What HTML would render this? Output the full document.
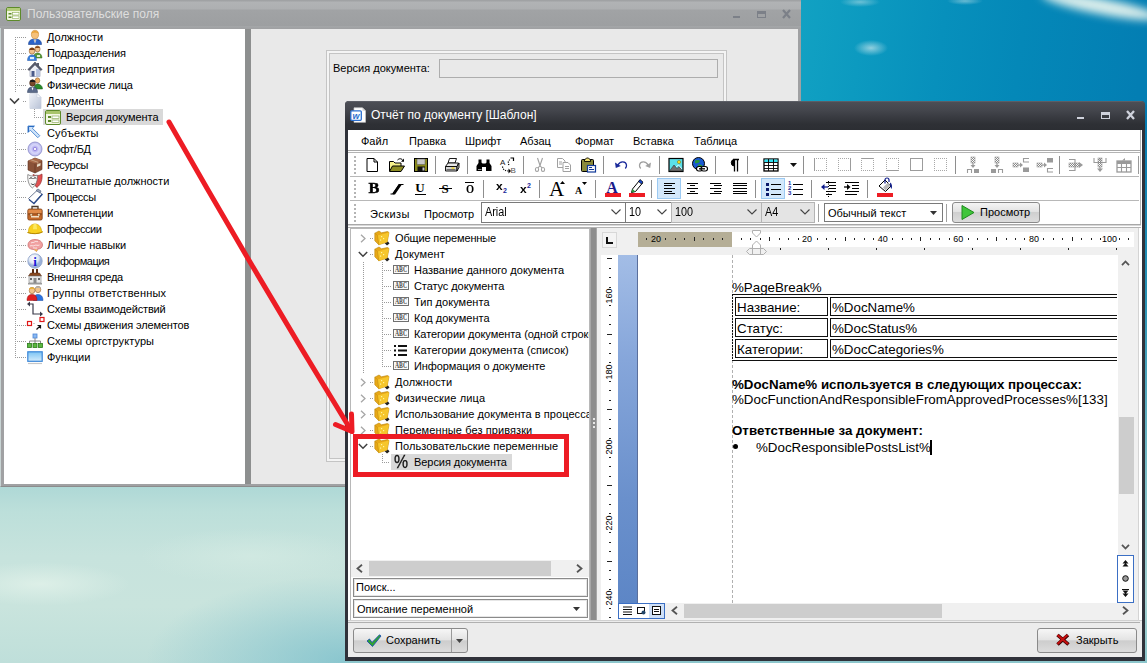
<!DOCTYPE html>
<html><head><meta charset="utf-8"><title>Отчёт по документу [Шаблон]</title>
<style>
*{box-sizing:border-box;margin:0;padding:0}
html,body{width:1147px;height:663px;overflow:hidden}
body{position:relative;font-family:"Liberation Sans","DejaVu Sans",sans-serif;font-size:11px;color:#000;background:#8cc}
.a{position:absolute}
.t{position:absolute;white-space:nowrap;line-height:16px;height:16px}
svg{position:absolute;overflow:visible}
#bg{left:0;top:0;width:1147px;height:663px;background:linear-gradient(180deg,#037eb3 0,#0379b0 110px,#2a93b5 300px,#7fc0c8 480px,#a5d2d2 600px,#8cc6cc 663px)}
#sky{left:795px;top:0;width:352px;height:105px;background:
radial-gradient(ellipse 18px 4px at 170px 1px,rgba(200,230,235,.5),rgba(200,230,235,0) 100%),
radial-gradient(ellipse 20px 5px at 65px 2px,rgba(200,230,235,.5),rgba(200,230,235,0) 100%),
radial-gradient(ellipse 17px 8px at 76px 48px,rgba(200,230,236,.7),rgba(200,230,236,0) 100%),
linear-gradient(98deg,#12a2c3 0,#0c9ac0 70px,#0790bc 150px,#0488b8 230px,#037eb3 352px)}
#sea{left:0;top:486px;width:346px;height:177px;background:
radial-gradient(ellipse 90px 22px at 40px 98px,rgba(226,242,234,.8),rgba(226,242,234,0) 100%),
radial-gradient(ellipse 110px 28px at 250px 70px,rgba(214,236,228,.6),rgba(214,236,228,0) 100%),
radial-gradient(ellipse 200px 85px at 346px 175px,rgba(125,192,204,.8),rgba(125,192,204,0) 100%),
linear-gradient(180deg,#aed8d6 0,#bcdfda 25px,#c7e3dd 70px,#c9e4dd 120px,#bfdfda 177px)}
.sepv{position:absolute;width:2px;border-left:1px solid #a0a0a0;border-right:1px solid #fff}
</style></head><body>
<div id="bg" class="a"></div><div id="sky" class="a"></div><div id="sea" class="a"></div><div class="a" style="left:1040px;top:-2px;width:120px;height:16px;border-radius:50%;background:rgba(236,246,240,.92);transform:rotate(11deg);filter:blur(4px)"></div>
<div class="a" style="left:0px;top:0px;width:801px;height:487px;background:#a0a1a3;border-bottom:1px solid #8c8c8c;border-left:1px solid #c8d4d4"></div>
<div class="a" style="left:0px;top:0px;width:801px;height:28px;background:linear-gradient(#a0a2a4 0,#a0a2a4 1px,#b1b3b5 2px,#adafb1 9px,#a1a3a5 10px,#9d9fa1 26px,#aaacae 27px,#999b9d 28px)"></div>
<svg style="left:6px;top:7px" width="15" height="14" viewBox="0 0 15 14"><rect x=".5" y=".5" width="14" height="13" rx="1.500" fill="#f1f5df" stroke="#5d8a2a"/><rect x="1" y="1" width="13" height="3" fill="#b3cc7a"/><rect x="2.500" y="6" width="3" height="1.500" fill="#5d8a2a"/><rect x="6.500" y="5.500" width="6.500" height="2.500" fill="#fff" stroke="#8aac52" stroke-width=".6"/><rect x="2.500" y="9.500" width="3" height="1.500" fill="#5d8a2a"/><rect x="6.500" y="9" width="6.500" height="2.500" fill="#fff" stroke="#8aac52" stroke-width=".6"/></svg>
<div class="t" style="left:27px;top:6px;font-size:12px;color:#dedede">Пользовательские поля</div>
<div class="a" style="left:733px;top:16px;width:7px;height:2px;background:#7c8088"></div>
<div class="a" style="left:757px;top:11px;width:9px;height:7px;border:1px solid #7c8088;border-top:3px solid #7c8088"></div>
<svg style="left:782px;top:10px" width="9" height="8" viewBox="0 0 9 8"><path d="M1 0l7 8M8 0l-7 8" stroke="#7c8088" stroke-width="2.200" fill="none"/></svg>
<div class="a" style="left:4px;top:29px;width:241px;height:455px;background:#fff"></div>
<div class="a" style="left:245px;top:29px;width:6px;height:455px;background:#8d8f8f"></div>
<div class="a" style="left:251px;top:29px;width:547px;height:455px;background:#e9e9e9"></div>
<div class="a" style="left:326px;top:50px;width:401px;height:412px;border:1px solid #c4c4c4;background:#f4f4f4"></div>
<div class="a" style="left:329px;top:53px;width:395px;height:406px;border:1px solid #c4c4c4;background:#e9e9e9"></div>
<div class="t" style="left:333px;top:60px;">Версия документа:</div>
<div class="a" style="left:439px;top:59px;width:279px;height:19px;border:1px solid #adadad;background:#e9e9e9"></div>
<div class="a" style="left:15px;top:37px;width:1px;height:321px;background-image:linear-gradient(180deg,#9a9a9a 1px,transparent 1px);background-size:1px 2px"></div>
<div class="a" style="left:15px;top:37px;width:11px;height:1px;background-image:linear-gradient(90deg,#9a9a9a 1px,transparent 1px);background-size:2px 1px"></div>
<div class="t" style="left:47px;top:29px;">Должности</div>
<div class="a" style="left:15px;top:53px;width:11px;height:1px;background-image:linear-gradient(90deg,#9a9a9a 1px,transparent 1px);background-size:2px 1px"></div>
<div class="t" style="left:47px;top:45px;letter-spacing:-0.08px">Подразделения</div>
<div class="a" style="left:15px;top:69px;width:11px;height:1px;background-image:linear-gradient(90deg,#9a9a9a 1px,transparent 1px);background-size:2px 1px"></div>
<div class="t" style="left:47px;top:61px;">Предприятия</div>
<div class="a" style="left:15px;top:85px;width:11px;height:1px;background-image:linear-gradient(90deg,#9a9a9a 1px,transparent 1px);background-size:2px 1px"></div>
<div class="t" style="left:47px;top:77px;letter-spacing:-0.16px">Физические лица</div>
<div class="a" style="left:9px;top:93px;width:12px;height:16px;background:#fff"></div>
<svg style="left:9px;top:97px" width="11" height="8" viewBox="0 0 11 8"><path d="M1 1.5 L5.5 6 L10 1.5" fill="none" stroke="#404040" stroke-width="1.6"/></svg>
<div class="a" style="left:23px;top:101px;width:3px;height:1px;background-image:linear-gradient(90deg,#9a9a9a 1px,transparent 1px);background-size:2px 1px"></div>
<div class="t" style="left:47px;top:93px;">Документы</div>
<div class="a" style="left:43px;top:109px;width:120px;height:16px;background:#d9d9d9"></div>
<div class="a" style="left:34px;top:103px;width:1px;height:15px;background-image:linear-gradient(180deg,#9a9a9a 1px,transparent 1px);background-size:1px 2px"></div>
<div class="a" style="left:34px;top:117px;width:10px;height:1px;background-image:linear-gradient(90deg,#9a9a9a 1px,transparent 1px);background-size:2px 1px"></div>
<svg style="left:45px;top:110px" width="16" height="15" viewBox="0 0 16 15"><rect x=".5" y=".5" width="15" height="14" rx="1.5" fill="#f3f6e4" stroke="#5d8a2a"/><rect x="1" y="1" width="14" height="3" fill="#a9c46c"/><rect x="3" y="6" width="3" height="2" fill="#5d8a2a"/><rect x="7" y="6" width="7" height="2.5" fill="#fff" stroke="#7da046" stroke-width=".6"/><rect x="3" y="10" width="3" height="2" fill="#5d8a2a"/><rect x="7" y="10" width="7" height="2.5" fill="#fff" stroke="#7da046" stroke-width=".6"/></svg>
<div class="t" style="left:66px;top:109px;letter-spacing:-.09px">Версия документа</div>
<div class="a" style="left:15px;top:133px;width:11px;height:1px;background-image:linear-gradient(90deg,#9a9a9a 1px,transparent 1px);background-size:2px 1px"></div>
<div class="t" style="left:47px;top:125px;letter-spacing:0.14px">Субъекты</div>
<div class="a" style="left:15px;top:149px;width:11px;height:1px;background-image:linear-gradient(90deg,#9a9a9a 1px,transparent 1px);background-size:2px 1px"></div>
<div class="t" style="left:47px;top:141px;letter-spacing:-0.26px">Софт/БД</div>
<div class="a" style="left:15px;top:165px;width:11px;height:1px;background-image:linear-gradient(90deg,#9a9a9a 1px,transparent 1px);background-size:2px 1px"></div>
<div class="t" style="left:47px;top:157px;letter-spacing:-0.31px">Ресурсы</div>
<div class="a" style="left:15px;top:181px;width:11px;height:1px;background-image:linear-gradient(90deg,#9a9a9a 1px,transparent 1px);background-size:2px 1px"></div>
<div class="t" style="left:47px;top:173px;">Внештатные должности</div>
<div class="a" style="left:15px;top:197px;width:11px;height:1px;background-image:linear-gradient(90deg,#9a9a9a 1px,transparent 1px);background-size:2px 1px"></div>
<div class="t" style="left:47px;top:189px;letter-spacing:-0.33px">Процессы</div>
<div class="a" style="left:15px;top:213px;width:11px;height:1px;background-image:linear-gradient(90deg,#9a9a9a 1px,transparent 1px);background-size:2px 1px"></div>
<div class="t" style="left:47px;top:205px;letter-spacing:-0.1px">Компетенции</div>
<div class="a" style="left:15px;top:229px;width:11px;height:1px;background-image:linear-gradient(90deg,#9a9a9a 1px,transparent 1px);background-size:2px 1px"></div>
<div class="t" style="left:47px;top:221px;letter-spacing:-0.47px">Профессии</div>
<div class="a" style="left:15px;top:245px;width:11px;height:1px;background-image:linear-gradient(90deg,#9a9a9a 1px,transparent 1px);background-size:2px 1px"></div>
<div class="t" style="left:47px;top:237px;">Личные навыки</div>
<div class="a" style="left:15px;top:261px;width:11px;height:1px;background-image:linear-gradient(90deg,#9a9a9a 1px,transparent 1px);background-size:2px 1px"></div>
<div class="t" style="left:47px;top:253px;letter-spacing:-0.51px">Информация</div>
<div class="a" style="left:15px;top:277px;width:11px;height:1px;background-image:linear-gradient(90deg,#9a9a9a 1px,transparent 1px);background-size:2px 1px"></div>
<div class="t" style="left:47px;top:269px;letter-spacing:-0.27px">Внешняя среда</div>
<div class="a" style="left:15px;top:293px;width:11px;height:1px;background-image:linear-gradient(90deg,#9a9a9a 1px,transparent 1px);background-size:2px 1px"></div>
<div class="t" style="left:47px;top:285px;letter-spacing:0.22px">Группы ответственных</div>
<div class="a" style="left:15px;top:309px;width:11px;height:1px;background-image:linear-gradient(90deg,#9a9a9a 1px,transparent 1px);background-size:2px 1px"></div>
<div class="t" style="left:47px;top:301px;letter-spacing:-0.16px">Схемы взаимодействий</div>
<div class="a" style="left:15px;top:325px;width:11px;height:1px;background-image:linear-gradient(90deg,#9a9a9a 1px,transparent 1px);background-size:2px 1px"></div>
<div class="t" style="left:47px;top:317px;letter-spacing:-0.14px">Схемы движения элементов</div>
<div class="a" style="left:15px;top:341px;width:11px;height:1px;background-image:linear-gradient(90deg,#9a9a9a 1px,transparent 1px);background-size:2px 1px"></div>
<div class="t" style="left:47px;top:333px;letter-spacing:0.09px">Схемы оргструктуры</div>
<div class="a" style="left:15px;top:357px;width:11px;height:1px;background-image:linear-gradient(90deg,#9a9a9a 1px,transparent 1px);background-size:2px 1px"></div>
<div class="t" style="left:47px;top:349px;">Функции</div>
<svg style="left:27px;top:29px" width="16" height="16" viewBox="0 0 16 16"><path d="M1.500 15.500c0-4 2.500-5.500 6.500-5.500s6.500 1.500 6.500 5.500z" fill="#2a62c8" stroke="#1a3f8a" stroke-width=".6"/><path d="M6.500 10.500l1.500 4l1.500-4z" fill="#fff"/><path d="M7.600 11l.4 3l.4-3z" fill="#444"/><ellipse cx="8" cy="5.500" rx="3.600" ry="4.200" fill="#f5c07a" stroke="#c88a3a" stroke-width=".6"/><path d="M4.500 4.500c.5-3 6-3.500 7 0c-2-1.500-5-1.500-7 0z" fill="#e8a030"/></svg>
<svg style="left:27px;top:45px" width="16" height="16" viewBox="0 0 16 16"><ellipse cx="10.500" cy="4" rx="2.600" ry="3" fill="#f2c08a" stroke="#8a5a2a" stroke-width=".6"/><path d="M8 3c.5-2.500 4.500-2.500 5 0z" fill="#8a4a1a"/><path d="M6.500 13c0-3.500 1.500-5 4-5s4.500 1.500 4.500 5z" fill="#5a9a3a" stroke="#3a6a1a" stroke-width=".5"/><rect x="10" y="10" width="3" height="2" fill="#dff0d0"/><ellipse cx="5" cy="6" rx="2.800" ry="3.200" fill="#f2c08a" stroke="#8a5a2a" stroke-width=".6"/><path d="M2.300 5c.5-3 5-3 5.500 0z" fill="#7a3a10"/><path d="M.5 15.500c0-3.500 1.500-5.500 4.500-5.500s4.500 2 4.500 5.500z" fill="#3a82e0" stroke="#1a4fa0" stroke-width=".5"/><rect x="3" y="12" width="4" height="2.200" fill="#e0eefc"/></svg>
<svg style="left:27px;top:61px" width="16" height="16" viewBox="0 0 16 16"><path d="M3 8v7.500h10v-7.500l-5-4.500z" fill="#eef0f6" stroke="#8a90a8" stroke-width=".6"/><path d="M9 8v7.500h4v-7.500z" fill="#b8c4e0"/><path d="M.8 8.500l7.200-7.500l7.200 7.500l-1.500 1l-5.700-5.800l-5.700 5.800z" fill="#5a5e6e" stroke="#3a3e4e" stroke-width=".5"/><rect x="4.500" y="10" width="3" height="5.500" fill="#4a5a8a"/><rect x="10" y="2" width="2" height="3" fill="#5a5e6e"/></svg>
<svg style="left:27px;top:77px" width="16" height="16" viewBox="0 0 16 16"><ellipse cx="10.500" cy="3.500" rx="2.300" ry="2.700" fill="#e8a860" stroke="#8a5a2a" stroke-width=".5"/><path d="M7 12c0-3.500 1.500-5 3.500-5s5 1.500 5 5z" fill="#2a8a2a" stroke="#1a5a1a" stroke-width=".5"/><ellipse cx="5.500" cy="6" rx="2.800" ry="3.200" fill="#7a4a2a" stroke="#3a2010" stroke-width=".6"/><path d="M2.800 5c.5-3 5-3 5.500 0z" fill="#1a1a1a"/><path d="M.5 15.500c0-3.500 1.500-5.500 5-5.500s5 2 5 5.500z" fill="#5a6a8a" stroke="#2a3a5a" stroke-width=".5"/><path d="M4.500 10.500l1 3l1-3z" fill="#fff"/></svg>
<svg style="left:27px;top:93px" width="16" height="16" viewBox="0 0 16 16"><path d="M3 .5h7l4 4v11h-11z" fill="#dfe4ee" stroke="#c0c8d8" stroke-width=".7"/><path d="M3 .5h7l4 4v11h-11z" fill="url(#dg)"/><path d="M10 .5v4h4z" fill="#f4f6fa" stroke="#c0c8d8" stroke-width=".5"/></svg>
<svg width="0" height="0" style="left:0;top:0"><defs><linearGradient id="dg" x1="0" y1="0" x2="1" y2="1"><stop offset="0" stop-color="#eef1f7"/><stop offset="1" stop-color="#b8c2d6"/></linearGradient><radialGradient id="cdg"><stop offset="0" stop-color="#fff"/><stop offset=".25" stop-color="#b0a8f0"/><stop offset=".6" stop-color="#d8d8fa"/><stop offset="1" stop-color="#b8b8ee"/></radialGradient><radialGradient id="ig" cx=".4" cy=".3"><stop offset="0" stop-color="#fff"/><stop offset=".7" stop-color="#dde6f4"/><stop offset="1" stop-color="#9ab0d8"/></radialGradient><linearGradient id="fg" x1="0" y1="0" x2="0" y2="1"><stop offset="0" stop-color="#7cc4f4"/><stop offset="1" stop-color="#d4ecfc"/></linearGradient></defs></svg>
<svg style="left:27px;top:125px" width="16" height="16" viewBox="0 0 16 16"><path d="M1 1h6.500l-2.200 2.200l7.500 7.500l-2 2l-7.500-7.500l-2.300 2.300z" fill="#cfe4fa" stroke="#4a86d0" stroke-width=".9"/><path d="M1.500 1.500h5.500M1.500 1.500v5.500" stroke="#2a6ac0" stroke-width="1.200"/></svg>
<svg style="left:27px;top:141px" width="16" height="16" viewBox="0 0 16 16"><circle cx="8" cy="8" r="7" fill="url(#cdg)" stroke="#8a8ac8" stroke-width=".8"/><circle cx="8" cy="8" r="1.600" fill="#fff" stroke="#8a7ad8" stroke-width=".8"/></svg>
<svg style="left:27px;top:157px" width="16" height="16" viewBox="0 0 16 16"><path d="M1 4l7-3l7 2.500v9l-7 3.500l-7-3z" fill="#8a5238" stroke="#5a3020" stroke-width=".6"/><path d="M1 4l7 2.500l7-3l-7-2.500z" fill="#a86a4a"/><path d="M8 6.500v9.500" stroke="#5a3020" stroke-width=".6"/><rect x="10" y="7" width="3.500" height="2.500" fill="#e8dcc8" transform="skewY(-22) translate(0 4.500)"/><path d="M4 2.800l7 2.500v2" fill="none" stroke="#c8a080" stroke-width="1"/></svg>
<svg style="left:27px;top:173px" width="16" height="16" viewBox="0 0 16 16"><path d="M6 1.500c3 1.500 6 1.500 9-.5c.5 5-.5 10-5 13.500c-2-1-4-6-4-13z" fill="#e05050" stroke="#8a2020" stroke-width=".6"/><path d="M.8 1.500c3 2 6 2 9.500.5c.5 5-1 10-5 13c-3-2-5-7-4.500-13.500z" fill="#f8f8f8" stroke="#666" stroke-width=".7"/><path d="M2.500 5.500c1-.8 2-.8 3 0M6.500 5.500c1-.8 2-.8 2.800-.2" stroke="#111" stroke-width="1" fill="none"/><path d="M3.500 10c1.500 1.500 3.500 1.500 5 0c-1.500 2.500-3.500 2.500-5 0z" fill="#111"/></svg>
<svg style="left:27px;top:189px" width="16" height="16" viewBox="0 0 16 16"><path d="M1.500 9.500l8.500-8l5 3.500l-8.500 9.500z" fill="#fff" stroke="#4a5a7a" stroke-width=".8"/><path d="M2 10.500l5 4l8.500-9.500" fill="none" stroke="#2a4a8a" stroke-width="1.300"/><path d="M9 1.500l2-1.500l3 2l-1 2z" fill="#9aa4b8" stroke="#4a5a7a" stroke-width=".6"/></svg>
<svg style="left:27px;top:205px" width="16" height="16" viewBox="0 0 16 16"><path d="M5 4v-2.500h6v2.500" fill="none" stroke="#4a3a2a" stroke-width="1.300"/><rect x=".8" y="4" width="14.400" height="11" rx="1.500" fill="#c46a2a" stroke="#7a3a10" stroke-width=".8"/><rect x="1.500" y="4.800" width="13" height="3.500" fill="#e08a48"/><path d="M1 9h14" stroke="#7a3a10" stroke-width=".8"/><rect x="3" y="8.500" width="2.500" height="2.500" fill="#f0d8b0" stroke="#7a3a10" stroke-width=".5"/><rect x="10.500" y="8.500" width="2.500" height="2.500" fill="#f0d8b0" stroke="#7a3a10" stroke-width=".5"/><rect x="4" y="11" width="8" height="1.500" fill="#f0e0c8"/></svg>
<svg style="left:27px;top:221px" width="16" height="16" viewBox="0 0 16 16"><path d="M1.500 10.500c0-5 3-7.500 6.500-7.500s6 2.500 6.500 6.500l1 1.500c-4 2-11 2-15 .5z" fill="#f8d020" stroke="#c89a00" stroke-width=".6"/><path d="M6.500 3.200c1-.5 2-.5 3 0l.5 5h-4z" fill="#fce860"/><path d="M.8 11.500c4 1.800 11 1.500 14.700-.5" fill="none" stroke="#b88a00" stroke-width="1"/></svg>
<svg style="left:27px;top:237px" width="16" height="16" viewBox="0 0 16 16"><path d="M1 8c0-3.500 3-5.500 7-5.500s7.500 2 7.500 5.500c0 2.500-2 4-4.500 4l-1.500 2.500l-2.500-2c-3.500 0-6-1.500-6-4.500z" fill="#f0a0a0" stroke="#c86a6a" stroke-width=".7"/><path d="M4 6c1.500-1 2.500 0 3.500-1s2.500 0 3.500-.5M3 9c1.500-1 3 .5 4.500-.5s3 .5 5-.5M6 11c1-.5 2.500.5 4 0" fill="none" stroke="#fff" stroke-width=".9" opacity=".8"/><path d="M8 12.500l2 1.500" stroke="#e8c040" stroke-width="1.500"/></svg>
<svg style="left:27px;top:253px" width="16" height="16" viewBox="0 0 16 16"><circle cx="8" cy="8" r="7.200" fill="url(#ig)" stroke="#8aa0c8" stroke-width=".8"/><text x="8" y="13" font-size="13" font-weight="bold" text-anchor="middle" fill="#1818d8" font-family="Liberation Serif,serif">i</text></svg>
<svg style="left:27px;top:269px" width="16" height="16" viewBox="0 0 16 16"><rect x="5" y="0" width="2" height="5" fill="#5a2a10"/><rect x="9" y="0" width="2" height="5" fill="#5a2a10"/><path d="M1.500 7l2-3h9l2 3z" fill="#8a4a20" stroke="#5a2a10" stroke-width=".5"/><rect x="2" y="7" width="12" height="7" fill="#e8e8e8" stroke="#7a7a7a" stroke-width=".6"/><rect x="6.500" y="9" width="3" height="5" fill="#8a8a8a"/><rect x="3" y="9" width="2" height="2" fill="#6a6a6a"/><rect x="11" y="9" width="2" height="2" fill="#6a6a6a"/><rect x="1" y="14" width="14" height="1.500" fill="#9a9a9a"/></svg>
<svg style="left:27px;top:285px" width="16" height="16" viewBox="0 0 16 16"><ellipse cx="11" cy="4.500" rx="2.800" ry="3.200" fill="#f2c48a" stroke="#9a6a3a" stroke-width=".6"/><path d="M8 3.500c.5-3 5.500-3 6 0c-2-1-4-1-6 0z" fill="#b0b0b0"/><path d="M6.500 15.500c0-4.500 2-6 4.500-6s5 1.500 5 6z" fill="#2a72e0" stroke="#1a4aa0" stroke-width=".5"/><ellipse cx="5" cy="5.500" rx="2.800" ry="3.200" fill="#f2c48a" stroke="#9a6a3a" stroke-width=".6"/><path d="M2 4.500c.5-3 5.500-3 6 0c-2-1-4-1-6 0z" fill="#e8b030"/><path d="M0 15.500c0-4.500 2-6 5-6s5 1.500 5 6z" fill="#e02020" stroke="#9a1010" stroke-width=".5"/></svg>
<svg style="left:27px;top:301px" width="16" height="16" viewBox="0 0 16 16"><path d="M2 3h4v10h8" fill="none" stroke="#3a3a4a" stroke-width="1.200"/><path d="M0 3l3-2.500v5z" fill="#3a3a4a"/><path d="M16 13l-3-2.500v5z" fill="#3a3a4a"/></svg>
<svg style="left:27px;top:317px" width="16" height="16" viewBox="0 0 16 16"><rect x=".5" y="4.500" width="4" height="4" fill="#fff" stroke="#e01818" stroke-width="1.200"/><rect x="13" y="0.500" width="4" height="4" fill="#fff" stroke="#e01818" stroke-width="1.200"/><path d="M6 6.500h2" stroke="#ccc" stroke-width="1"/><path d="M9.500 12.500l4-4M10.500 8.500h3v3" fill="none" stroke="#111" stroke-width="1.200"/></svg>
<svg style="left:27px;top:333px" width="16" height="16" viewBox="0 0 16 16"><rect x="6" y="1" width="4" height="4" fill="#8ab8f0" stroke="#4a86d8" stroke-width=".8"/><path d="M8 5v3M2.500 10.500v-2.500h11v2.500M8 8v2.500" fill="none" stroke="#7a7a7a" stroke-width=".9"/><rect x=".5" y="10.500" width="4" height="4" fill="#5ab840" stroke="#2a7a1a" stroke-width=".8"/><rect x="6" y="10.500" width="4" height="4" fill="#5ab840" stroke="#2a7a1a" stroke-width=".8"/><rect x="11.500" y="10.500" width="4" height="4" fill="#5ab840" stroke="#2a7a1a" stroke-width=".8"/></svg>
<svg style="left:27px;top:349px" width="16" height="16" viewBox="0 0 16 16"><rect x=".8" y="2.800" width="14.400" height="9.500" fill="url(#fg)" stroke="#3a86d8" stroke-width="1.200"/><path d="M1 14.500h14" stroke="#b0b0b0" stroke-width="1.200" opacity=".7"/></svg>
<div class="a" style="left:345px;top:101px;width:800px;height:560px;background:#30323a;border-radius:4px 4px 0 0"></div>
<div class="a" style="left:345px;top:101px;width:800px;height:29px;background:linear-gradient(#4c4e55,#44464d 8px,#393b41 15px,#2e3035 22px,#2c2e33);border-radius:4px 4px 0 0;border-top:1px solid #5c5e66"></div>
<svg style="left:350px;top:107px" width="17" height="16" viewBox="0 0 17 16"><path d="M4 .8h8.500l3 3v11.500h-11.500z" fill="#fff" stroke="#c8c8c8" stroke-width=".7"/><path d="M12.500 .8v3h3z" fill="#d0d0d0"/><rect x=".8" y="3.800" width="10.500" height="9.500" rx="1" fill="#fff" stroke="#2a6fd0" stroke-width="1.300"/><text x="6" y="11.600" font-size="9" font-weight="bold" font-style="italic" fill="#2a6fd0" text-anchor="middle" font-family="Liberation Sans,sans-serif">w</text></svg>
<div class="t" style="left:371px;top:107px;font-size:12px;color:#fff">Отчёт по документу [Шаблон]</div>
<div class="a" style="left:1077px;top:117px;width:7px;height:2px;background:#cfd2dc"></div>
<div class="a" style="left:1101px;top:112px;width:9px;height:7px;border:1px solid #cfd2dc;border-top:3px solid #cfd2dc"></div>
<svg style="left:1126px;top:111px" width="9" height="8" viewBox="0 0 9 8"><path d="M1 0l7 8M8 0l-7 8" stroke="#cfd2dc" stroke-width="2.300" fill="none"/></svg>
<div class="a" style="left:348px;top:130px;width:794px;height:527px;background:#fff"></div>
<div class="a" style="left:1140px;top:130px;width:1px;height:96px;background:#b4b4b4"></div>
<div class="t" style="left:361px;top:133px;">Файл</div>
<div class="t" style="left:409px;top:133px;">Правка</div>
<div class="t" style="left:465px;top:133px;">Шрифт</div>
<div class="t" style="left:520px;top:133px;">Абзац</div>
<div class="t" style="left:575px;top:133px;">Формат</div>
<div class="t" style="left:633px;top:133px;">Вставка</div>
<div class="t" style="left:694px;top:133px;">Таблица</div>
<div class="a" style="left:348px;top:150px;width:793px;height:1px;background:#a8a8a8"></div>
<div class="a" style="left:348px;top:152px;width:793px;height:1px;background:#b4b4b4"></div>
<div class="a" style="left:350px;top:176px;width:789px;height:1px;background:#b8b8b8"></div>
<div class="a" style="left:350px;top:200px;width:789px;height:1px;background:#b8b8b8"></div>
<div class="a" style="left:348px;top:224px;width:793px;height:1px;background:#a8a8a8"></div>
<div class="a" style="left:348px;top:225px;width:793px;height:1px;background:#d8d8d8"></div>
<div class="a" style="left:348px;top:227px;width:793px;height:1px;background:#b4b4b4"></div>
<div class="a" style="left:354px;top:156px;width:2px;height:20px;background-image:linear-gradient(180deg,#b4b4b4 2px,transparent 2px);background-size:2px 4px"></div>
<div class="a" style="left:354px;top:180px;width:2px;height:20px;background-image:linear-gradient(180deg,#b4b4b4 2px,transparent 2px);background-size:2px 4px"></div>
<div class="a" style="left:354px;top:204px;width:2px;height:20px;background-image:linear-gradient(180deg,#b4b4b4 2px,transparent 2px);background-size:2px 4px"></div>
<svg style="left:364px;top:157px" width="16" height="16" viewBox="0 0 16 16"><path d="M3 1.500h7l3.500 3.500v9.500h-10.500z" fill="#fff" stroke="#000" stroke-width="1"/><path d="M10 1.500v3.500h3.500" fill="none" stroke="#000" stroke-width="1"/></svg>
<svg style="left:389px;top:157px" width="16" height="16" viewBox="0 0 16 16"><path d="M.5 14V4.500h4l1.500 1.500h6v3" fill="#f7f28c" stroke="#000" stroke-width="1"/><path d="M.5 14.500l3-5.500h12l-3.500 5.500z" fill="#8e8e24" stroke="#000" stroke-width="1"/><path d="M8.500 3c2-2 4.500-1.500 5.500.8" fill="none" stroke="#000" stroke-width="1"/><path d="M15 1.500v3.200h-3z" fill="#000"/></svg>
<svg style="left:413px;top:157px" width="16" height="16" viewBox="0 0 16 16"><rect x="1.500" y="1.500" width="13" height="13" fill="#8a8a1c" stroke="#000"/><rect x="4" y="2" width="8" height="5.500" fill="#c8c8c8" stroke="#555" stroke-width=".5"/><rect x="4.500" y="9.500" width="7.500" height="5" fill="#111"/><rect x="9.500" y="10.500" width="2" height="3" fill="#c8c8c8"/></svg>
<div class="a" style="left:435px;top:156px;width:1px;height:18px;background:#8e8e8e"></div>
<svg style="left:444px;top:157px" width="16" height="16" viewBox="0 0 16 16"><path d="M4 6l1.500-4.500h7l-1.500 4.500z" fill="#fff" stroke="#000" stroke-width=".9"/><path d="M1.500 9.500l2.500-3.500h10.500l-1.500 3.500z" fill="#e8e8e8" stroke="#000" stroke-width=".9"/><path d="M1.500 9.500h11.500v4.500h-11.500z" fill="#d4d4d4" stroke="#000" stroke-width=".9"/><path d="M13 9.500l2-3.500v4.500l-2 3.500z" fill="#b0b0b0" stroke="#000" stroke-width=".9"/><rect x="7.500" y="10.500" width="3" height="1.200" fill="#f0d000"/><path d="M2.500 12.500h9" stroke="#555" stroke-width=".8"/></svg>
<div class="a" style="left:467px;top:156px;width:1px;height:18px;background:#8e8e8e"></div>
<svg style="left:476px;top:157px" width="16" height="16" viewBox="0 0 16 16"><path d="M2.500 2.500h3v3l1 1h3l1-1v-3h3v3.500l2 3v5h-5.500v-4h-4v4h-5.500v-5l2-3z" fill="#000"/><rect x="2" y="12" width="3.500" height="1" fill="#fff" opacity=".6"/></svg>
<svg style="left:500px;top:157px" width="16" height="16" viewBox="0 0 16 16"><text x="0" y="7.500" font-size="8" fill="#222" font-family="Liberation Sans,sans-serif">A</text><text x="10.500" y="15.500" font-size="8" fill="#555" font-family="Liberation Sans,sans-serif">B</text><path d="M2.500 9.500c.5 3.500 3 4.500 6 4.500" fill="none" stroke="#000" stroke-width="1.200" stroke-dasharray="1.200 1.200"/><path d="M8.500 11.500l2.500 2.500l-2.500 2.500z" fill="#000"/><path d="M9 8c-1.500-2.500-.5-5 2-6" fill="none" stroke="#000" stroke-width="1.200" stroke-dasharray="1.200 1.200"/><path d="M10.500 1h3v3" fill="none" stroke="#000" stroke-width="1.200"/></svg>
<div class="a" style="left:523px;top:156px;width:1px;height:18px;background:#8e8e8e"></div>
<svg style="left:532px;top:157px" width="16" height="16" viewBox="0 0 16 16"><path d="M5.500 1l2.500 7.500l2.500-7.500M8 8.500l-2 2.500M8 8.500l2 2.500" fill="none" stroke="#a0a0a0" stroke-width="1.100"/><ellipse cx="5" cy="12.500" rx="1.600" ry="2" fill="none" stroke="#a0a0a0" stroke-width="1.100"/><ellipse cx="11" cy="12.500" rx="1.600" ry="2" fill="none" stroke="#a0a0a0" stroke-width="1.100"/></svg>
<svg style="left:556px;top:157px" width="16" height="16" viewBox="0 0 16 16"><path d="M1.500 1.500h5l2.500 2.500v6.500h-7.500z" fill="#fff" stroke="#a0a0a0"/><path d="M7 5.500h5l2.500 2.500v6.500h-7.500z" fill="#fff" stroke="#a0a0a0"/><path d="M3 5h3M3 7h3M9 9.500h4M9 11.500h4" stroke="#a0a0a0" stroke-width="1"/></svg>
<svg style="left:580px;top:157px" width="16" height="16" viewBox="0 0 16 16"><rect x="1.500" y="2.500" width="12" height="12" rx="1" fill="#8a8a3a" stroke="#000"/><path d="M4.500 4.500v-1.500l2-2h2l2 2v1.500z" fill="#f0e070" stroke="#000" stroke-width=".9"/><rect x="7.500" y="8.500" width="8" height="6.500" fill="#fff" stroke="#123a9a" stroke-width="1.200"/><path d="M9 10.500h3M9 12.500h5" stroke="#123a9a" stroke-width="1"/></svg>
<div class="a" style="left:603px;top:156px;width:1px;height:18px;background:#8e8e8e"></div>
<svg style="left:613px;top:157px" width="16" height="16" viewBox="0 0 16 16"><path d="M5 8c2-4.500 8-4 8.500 0c.2 1.500-.3 2.500-1.200 3.500" fill="none" stroke="#1a2a9a" stroke-width="1.300"/><path d="M2 5.500l.8 5.500l5-2z" fill="#1a2a9a"/></svg>
<svg style="left:637px;top:157px" width="16" height="16" viewBox="0 0 16 16"><path d="M11 8c-2-4.500-8-4-8.500 0c-.2 1.500.3 2.500 1.200 3.500" fill="none" stroke="#a0a0a0" stroke-width="1.300"/><path d="M14 5.500l-.8 5.500l-5-2z" fill="#a0a0a0"/></svg>
<div class="a" style="left:659px;top:156px;width:1px;height:18px;background:#8e8e8e"></div>
<svg style="left:668px;top:157px" width="16" height="16" viewBox="0 0 16 16"><rect x="1" y="1.500" width="14" height="13" fill="#5ae0e8" stroke="#000" stroke-width="1.200"/><path d="M1.500 14l4.500-6l3 3.500l2-2l3.500 4.500z" fill="#707070" stroke="#222" stroke-width=".5"/><path d="M8 10l2.500-2l3.500 4" fill="none" stroke="#fff" stroke-width=".8"/><circle cx="11" cy="5" r="1.600" fill="#f5e020" stroke="#7a6a00" stroke-width=".5"/></svg>
<svg style="left:692px;top:157px" width="16" height="16" viewBox="0 0 16 16"><circle cx="6.500" cy="6.500" r="6" fill="#1a5ad0" stroke="#000" stroke-width="1"/><path d="M3 3.500c2-1 4-.5 5 .5c-1 2-3 2.500-5 2zM6 8c2-1 4 0 5 1.500c-1 1.500-3.500 2-5 1z" fill="#2a9a3a"/><rect x="4.500" y="9.500" width="6" height="4.500" rx="2.200" fill="#fff" stroke="#000" stroke-width="1.100"/><rect x="9" y="9.500" width="6.500" height="4.500" rx="2.200" fill="#fff" stroke="#000" stroke-width="1.100"/><path d="M7 11.800h6" stroke="#000" stroke-width="1.300"/></svg>
<div class="a" style="left:715px;top:156px;width:1px;height:18px;background:#8e8e8e"></div>
<svg style="left:725px;top:157px" width="16" height="16" viewBox="0 0 16 16"><path d="M8 2.500h6M9.500 2.500v12M12.500 2.500v12" stroke="#000" stroke-width="1.300" fill="none"/><path d="M9.500 2.500a3.200 3.200 0 0 0 0 6.500z" fill="#000" stroke="#000"/></svg>
<div class="a" style="left:747px;top:156px;width:1px;height:18px;background:#8e8e8e"></div>
<svg style="left:763px;top:157px" width="16" height="16" viewBox="0 0 16 16"><rect x="1" y="2" width="14" height="12" fill="#fff" stroke="#000" stroke-width="1.300"/><rect x="1.500" y="2.500" width="13" height="2.500" fill="#30e0f0"/><path d="M1 5.500h14M1 8.500h14M1 11.500h14M5.500 2v12M10.500 2v12" stroke="#000" stroke-width=".9"/></svg>
<svg style="left:790px;top:163px" width="7" height="4" viewBox="0 0 7 4"><path d="M0 0h7l-3.500 4z" fill="#111"/></svg>
<div class="a" style="left:803px;top:156px;width:1px;height:18px;background:#8e8e8e"></div>
<div class="a" style="left:814px;top:158px;width:13px;height:1px;background-image:linear-gradient(90deg,#a8a8a8 1px,transparent 1px);background-size:2px 1px"></div>
<div class="a" style="left:814px;top:170px;width:13px;height:1px;background-image:linear-gradient(90deg,#a8a8a8 1px,transparent 1px);background-size:2px 1px"></div>
<div class="a" style="left:814px;top:158px;width:1px;height:13px;background:#9c9c9c"></div>
<div class="a" style="left:826px;top:158px;width:1px;height:13px;background-image:linear-gradient(180deg,#a8a8a8 1px,transparent 1px);background-size:1px 2px"></div>
<div class="a" style="left:838px;top:158px;width:13px;height:1px;background-image:linear-gradient(90deg,#a8a8a8 1px,transparent 1px);background-size:2px 1px"></div>
<div class="a" style="left:838px;top:170px;width:13px;height:1px;background-image:linear-gradient(90deg,#a8a8a8 1px,transparent 1px);background-size:2px 1px"></div>
<div class="a" style="left:838px;top:158px;width:1px;height:13px;background-image:linear-gradient(180deg,#a8a8a8 1px,transparent 1px);background-size:1px 2px"></div>
<div class="a" style="left:850px;top:158px;width:1px;height:13px;background:#9c9c9c"></div>
<div class="a" style="left:861px;top:158px;width:13px;height:1px;background:#9c9c9c"></div>
<div class="a" style="left:861px;top:170px;width:13px;height:1px;background-image:linear-gradient(90deg,#a8a8a8 1px,transparent 1px);background-size:2px 1px"></div>
<div class="a" style="left:861px;top:158px;width:1px;height:13px;background-image:linear-gradient(180deg,#a8a8a8 1px,transparent 1px);background-size:1px 2px"></div>
<div class="a" style="left:873px;top:158px;width:1px;height:13px;background-image:linear-gradient(180deg,#a8a8a8 1px,transparent 1px);background-size:1px 2px"></div>
<div class="a" style="left:886px;top:158px;width:13px;height:1px;background-image:linear-gradient(90deg,#a8a8a8 1px,transparent 1px);background-size:2px 1px"></div>
<div class="a" style="left:886px;top:170px;width:13px;height:1px;background:#9c9c9c"></div>
<div class="a" style="left:886px;top:158px;width:1px;height:13px;background-image:linear-gradient(180deg,#a8a8a8 1px,transparent 1px);background-size:1px 2px"></div>
<div class="a" style="left:898px;top:158px;width:1px;height:13px;background-image:linear-gradient(180deg,#a8a8a8 1px,transparent 1px);background-size:1px 2px"></div>
<div class="a" style="left:910px;top:158px;width:13px;height:1px;background:#9c9c9c"></div>
<div class="a" style="left:910px;top:170px;width:13px;height:1px;background:#9c9c9c"></div>
<div class="a" style="left:910px;top:158px;width:1px;height:13px;background:#9c9c9c"></div>
<div class="a" style="left:922px;top:158px;width:1px;height:13px;background:#9c9c9c"></div>
<div class="a" style="left:934px;top:158px;width:13px;height:1px;background-image:linear-gradient(90deg,#a8a8a8 1px,transparent 1px);background-size:2px 1px"></div>
<div class="a" style="left:934px;top:170px;width:13px;height:1px;background-image:linear-gradient(90deg,#a8a8a8 1px,transparent 1px);background-size:2px 1px"></div>
<div class="a" style="left:934px;top:158px;width:1px;height:13px;background-image:linear-gradient(180deg,#a8a8a8 1px,transparent 1px);background-size:1px 2px"></div>
<div class="a" style="left:946px;top:158px;width:1px;height:13px;background-image:linear-gradient(180deg,#a8a8a8 1px,transparent 1px);background-size:1px 2px"></div>
<div class="a" style="left:955px;top:156px;width:1px;height:18px;background:#8e8e8e"></div>
<svg width="0" height="0" style="left:0;top:0"><defs><pattern id="hp" width="2" height="2" patternUnits="userSpaceOnUse"><rect width="1" height="1" fill="#888"/><rect x="1" y="1" width="1" height="1" fill="#888"/></pattern></defs></svg>
<svg style="left:965px;top:157px" width="16" height="16" viewBox="0 0 16 16"><rect x="6" y="0" width="4" height="6" fill="url(#hp)" stroke="#9a9a9a" stroke-width=".6"/><path d="M8 6v4" stroke="#9a9a9a" stroke-width="1.200"/><path d="M5.500 8h5l-2.500 3z" fill="#9a9a9a"/><path d="M2.500 16v-3.500h4v3.500" fill="none" stroke="#9a9a9a" stroke-width="1.100"/><rect x="9" y="12" width="5" height="4" fill="#9a9a9a"/></svg>
<svg style="left:989px;top:157px" width="16" height="16" viewBox="0 0 16 16"><rect x="6" y="0" width="4" height="6" fill="url(#hp)" stroke="#9a9a9a" stroke-width=".6"/><path d="M8 6v4" stroke="#9a9a9a" stroke-width="1.200"/><path d="M5.500 8h5l-2.500 3z" fill="#9a9a9a"/><path d="M9.500 16v-3.500h4v3.500" fill="none" stroke="#9a9a9a" stroke-width="1.100"/><rect x="2" y="12" width="5" height="4" fill="#9a9a9a"/></svg>
<svg style="left:1013px;top:157px" width="16" height="16" viewBox="0 0 16 16"><rect x="0" y="6" width="5" height="4" fill="url(#hp)" stroke="#9a9a9a" stroke-width=".6"/><path d="M5 8h3" stroke="#9a9a9a" stroke-width="1.200"/><path d="M7 5.500v5l3-2.500z" fill="#9a9a9a"/><path d="M16 1.500h-5.500v3.500h5.500" fill="none" stroke="#9a9a9a" stroke-width="1.100"/><rect x="10" y="10.500" width="6" height="4.500" fill="#9a9a9a"/></svg>
<svg style="left:1037px;top:157px" width="16" height="16" viewBox="0 0 16 16"><rect x="0" y="6" width="5" height="4" fill="url(#hp)" stroke="#9a9a9a" stroke-width=".6"/><path d="M5 8h3" stroke="#9a9a9a" stroke-width="1.200"/><path d="M7 5.500v5l3-2.500z" fill="#9a9a9a"/><path d="M16 11.500h-5.500v3.500h5.500" fill="none" stroke="#9a9a9a" stroke-width="1.100"/><rect x="10" y="1" width="6" height="4.500" fill="#9a9a9a"/></svg>
<div class="a" style="left:1059px;top:156px;width:1px;height:18px;background:#8e8e8e"></div>
<svg style="left:1068px;top:157px" width="16" height="16" viewBox="0 0 16 16"><path d="M1 2.500h6v11h-6" fill="none" stroke="#9a9a9a" stroke-width="1.100"/><rect x="1" y="6" width="10" height="4" fill="url(#hp)" stroke="#9a9a9a" stroke-width=".6"/><path d="M11 5l4 3l-4 3z" fill="#9a9a9a"/></svg>
<svg style="left:1092px;top:157px" width="16" height="16" viewBox="0 0 16 16"><path d="M2 1v4.500h12v-4.500M8 1v3" fill="none" stroke="#9a9a9a" stroke-width="1.100"/><rect x="6" y="1" width="4" height="9" fill="url(#hp)" stroke="#9a9a9a" stroke-width=".6"/><path d="M8 10v3" stroke="#9a9a9a" stroke-width="1.200"/><path d="M5 11.500h6l-3 3.500z" fill="#9a9a9a"/></svg>
<svg style="left:1116px;top:157px" width="16" height="16" viewBox="0 0 16 16"><rect x="1" y="4" width="14" height="11" fill="#fff" stroke="#9a9a9a" stroke-width="1.300"/><rect x="1" y="4" width="14" height="3" fill="#9a9a9a"/><path d="M1 10.500h14M5.500 7v8M10.500 7v8" stroke="#9a9a9a" stroke-width="1.100"/><path d="M6 3.500l3-2.500v2.500z" fill="#9a9a9a"/></svg>
<div class="a" style="left:1138px;top:156px;width:1px;height:18px;background:#9a9a9a"></div>
<div class="t" style="left:361.5px;top:181px;width:24px;text-align:center;font-family:'Liberation Serif',serif;font-weight:bold;font-size:13.600px;transform:scaleX(1.200);-webkit-text-stroke:.4px #000">B</div>
<svg style="left:388px;top:181px" width="16" height="16" viewBox="0 0 16 16"><path d="M2.500 13.500h4.500l6.500-9.500h2v-1h-4.500l-6.500 9.500h-2z" fill="#000"/><path d="M5 13l6.500-9.500" stroke="#000" stroke-width="1.600"/></svg>
<div class="t" style="left:408px;top:180px;width:24px;text-align:center;font-family:'Liberation Serif',serif;font-weight:bold;font-size:13px">U</div>
<div class="a" style="left:415px;top:194px;width:11px;height:1px;background:#000"></div>
<div class="t" style="left:433px;top:181px;width:24px;text-align:center;font-family:'Liberation Serif',serif;font-weight:bold;font-size:13px">S</div>
<div class="a" style="left:439px;top:188px;width:13px;height:1px;background:#000"></div>
<div class="t" style="left:457.5px;top:181px;width:24px;text-align:center;font-family:'Liberation Serif',serif;font-weight:bold;font-size:13px;transform:scaleX(.800)">O</div>
<div class="a" style="left:465px;top:182px;width:9px;height:1px;background:#000"></div>
<div class="a" style="left:483px;top:180px;width:1px;height:18px;background:#8e8e8e"></div>
<div class="t" style="left:496px;top:179px;font-weight:bold;font-size:10px;transform:scaleX(1.200);transform-origin:0 0">x</div>
<div class="t" style="left:503px;top:183px;font-weight:bold;font-size:7px;color:#1a2a9a">2</div>
<div class="t" style="left:520px;top:182px;font-weight:bold;font-size:10px;transform:scaleX(1.200);transform-origin:0 0">x</div>
<div class="t" style="left:527px;top:178px;font-weight:bold;font-size:7px;color:#1a2a9a">2</div>
<div class="a" style="left:539px;top:180px;width:1px;height:18px;background:#8e8e8e"></div>
<div class="t" style="left:544.5px;top:178px;width:24px;text-align:center;font-family:'Liberation Serif',serif;font-size:21px;line-height:22px;height:22px">A</div>
<svg style="left:560px;top:181px" width="5" height="3" viewBox="0 0 5 3"><path d="M0 3h5l-2.500-3z" fill="#000"/></svg>
<div class="t" style="left:566.5px;top:183px;width:24px;text-align:center;font-family:'Liberation Serif',serif;font-size:10px;font-weight:bold">A</div>
<svg style="left:582px;top:182px" width="5" height="3" viewBox="0 0 5 3"><path d="M0 0h5l-2.500 3z" fill="#000"/></svg>
<div class="a" style="left:595px;top:180px;width:1px;height:18px;background:#8e8e8e"></div>
<div class="t" style="left:600px;top:180px;width:24px;text-align:center;font-family:'Liberation Serif',serif;font-size:16px;font-weight:bold;color:#1a1a8a">A</div>
<div class="a" style="left:605px;top:193px;width:16px;height:4px;background:#ed1c24"></div>
<svg style="left:629px;top:178px" width="16" height="16" viewBox="0 0 16 16"><path d="M3.500 11l7-8.500l3 2.500l-7 8.500l-4 1z" fill="#fff" stroke="#000" stroke-width="1"/><path d="M9.500 3.500l3 2.500l1.500-2l-3-2.500z" fill="#1a4ad0" stroke="#000" stroke-width=".7"/><path d="M2.500 14.500l1-3.500l3 2.500z" fill="#2a9a3a"/></svg>
<div class="a" style="left:629px;top:193px;width:16px;height:4px;background:#ed1c24"></div>
<div class="a" style="left:651px;top:180px;width:1px;height:18px;background:#8e8e8e"></div>
<div class="a" style="left:657px;top:178px;width:24px;height:21px;background:#d3e8fb;border:1px solid #9ccaf3"></div>
<div class="a" style="left:664px;top:183px;width:11px;height:1px;background:#000"></div>
<div class="a" style="left:664px;top:185px;width:8px;height:1px;background:#000"></div>
<div class="a" style="left:664px;top:188px;width:11px;height:1px;background:#000"></div>
<div class="a" style="left:664px;top:191px;width:8px;height:1px;background:#000"></div>
<div class="a" style="left:664px;top:193px;width:11px;height:1px;background:#000"></div>
<div class="a" style="left:687px;top:183px;width:11px;height:1px;background:#000"></div>
<div class="a" style="left:690px;top:185px;width:5px;height:1px;background:#000"></div>
<div class="a" style="left:687px;top:188px;width:11px;height:1px;background:#000"></div>
<div class="a" style="left:690px;top:191px;width:5px;height:1px;background:#000"></div>
<div class="a" style="left:687px;top:193px;width:11px;height:1px;background:#000"></div>
<div class="a" style="left:710px;top:183px;width:11px;height:1px;background:#000"></div>
<div class="a" style="left:714px;top:185px;width:8px;height:1px;background:#000"></div>
<div class="a" style="left:710px;top:188px;width:11px;height:1px;background:#000"></div>
<div class="a" style="left:714px;top:191px;width:8px;height:1px;background:#000"></div>
<div class="a" style="left:710px;top:193px;width:11px;height:1px;background:#000"></div>
<div class="a" style="left:733px;top:183px;width:14px;height:1px;background:#000"></div>
<div class="a" style="left:733px;top:185px;width:14px;height:1px;background:#000"></div>
<div class="a" style="left:733px;top:188px;width:14px;height:1px;background:#000"></div>
<div class="a" style="left:733px;top:191px;width:14px;height:1px;background:#000"></div>
<div class="a" style="left:733px;top:193px;width:14px;height:1px;background:#000"></div>
<div class="a" style="left:755px;top:180px;width:1px;height:18px;background:#8e8e8e"></div>
<div class="a" style="left:761px;top:178px;width:24px;height:21px;background:#d3e8fb;border:1px solid #9ccaf3"></div>
<div class="a" style="left:766px;top:183px;width:3px;height:3px;background:#0c1a6a"></div>
<div class="a" style="left:771px;top:184px;width:10px;height:1px;background:#000"></div>
<div class="a" style="left:766px;top:188px;width:3px;height:3px;background:#0c1a6a"></div>
<div class="a" style="left:771px;top:189px;width:10px;height:1px;background:#000"></div>
<div class="a" style="left:766px;top:193px;width:3px;height:3px;background:#0c1a6a"></div>
<div class="a" style="left:771px;top:194px;width:10px;height:1px;background:#000"></div>
<div class="t" style="left:788px;top:179px;font-size:6px;font-weight:bold;color:#1a2a9a;line-height:8px;height:8px">1</div>
<div class="a" style="left:793px;top:184px;width:10px;height:1px;background:#000"></div>
<div class="t" style="left:788px;top:184px;font-size:6px;font-weight:bold;color:#1a2a9a;line-height:8px;height:8px">2</div>
<div class="a" style="left:793px;top:189px;width:10px;height:1px;background:#000"></div>
<div class="t" style="left:788px;top:189px;font-size:6px;font-weight:bold;color:#1a2a9a;line-height:8px;height:8px">3</div>
<div class="a" style="left:793px;top:194px;width:10px;height:1px;background:#000"></div>
<div class="a" style="left:811px;top:180px;width:1px;height:18px;background:#8e8e8e"></div>
<svg style="left:821px;top:181px" width="16" height="16" viewBox="0 0 16 16"><path d="M5 1.500h10M8 4.500h7M8 7.500h7M5 10.500h10M5 13.500h6" stroke="#000" stroke-width="1"/><path d="M0 6l3.500-3v6z" fill="#0c1a8a"/><path d="M3 6h4" stroke="#0c1a8a" stroke-width="1.300"/><path d="M7.500 0v16" stroke="#000" stroke-width="1" stroke-dasharray="1 1.500"/></svg>
<svg style="left:844px;top:181px" width="16" height="16" viewBox="0 0 16 16"><path d="M1 1.500h14M8 4.500h7M8 7.500h7M1 10.500h14M1 13.500h12" stroke="#000" stroke-width="1"/><path d="M6.500 6l-3.500-3v6z" fill="#000"/><path d="M0 6h4" stroke="#000" stroke-width="1.300"/></svg>
<div class="a" style="left:867px;top:180px;width:1px;height:18px;background:#8e8e8e"></div>
<svg style="left:877px;top:178px" width="16" height="16" viewBox="0 0 16 16"><path d="M2 8l6-6l6 6l-5.500 5.500z" fill="#fff" stroke="#000" stroke-width="1"/><path d="M6 9.500l5-5l2.500 3l-5 5z" fill="#b8b8b8"/><path d="M8 5.500v-3.500a2 2 0 0 1 4 0v2" fill="none" stroke="#0c1a8a" stroke-width="1.200"/><path d="M13 4.500c2 1 2.500 4 1.500 6.500c-1-1-1.500-3-1.500-6.500z" fill="#0c1a8a"/></svg>
<div class="a" style="left:877px;top:193px;width:16px;height:4px;background:#ed1c24"></div>
<div class="t" style="left:370px;top:206px;letter-spacing:.4px">Эскизы</div>
<div class="t" style="left:424px;top:206px;">Просмотр</div>
<div class="a" style="left:481px;top:202px;width:145px;height:21px;border:1px solid #7a7a7a;background:#fff"></div>
<div class="t" style="left:485px;top:204px;font-size:12px;transform:scaleX(.900);transform-origin:0 50%">Arial</div>
<svg style="left:611px;top:209px" width="10" height="6" viewBox="0 0 10 6"><path d="M.5 .5 L5 5 L9.500 .5" fill="none" stroke="#444" stroke-width="1.100"/></svg>
<div class="a" style="left:625px;top:202px;width:47px;height:21px;border:1px solid #7a7a7a;background:#fff"></div>
<div class="t" style="left:629px;top:204px;font-size:12px;transform:scaleX(.900);transform-origin:0 50%">10</div>
<svg style="left:657px;top:209px" width="10" height="6" viewBox="0 0 10 6"><path d="M.5 .5 L5 5 L9.500 .5" fill="none" stroke="#444" stroke-width="1.100"/></svg>
<div class="a" style="left:671px;top:202px;width:91px;height:21px;border:1px solid #b4b4b4;background:#e4e4e4"></div>
<div class="t" style="left:675px;top:204px;font-size:12px;transform:scaleX(.900);transform-origin:0 50%">100</div>
<svg style="left:747px;top:209px" width="10" height="6" viewBox="0 0 10 6"><path d="M.5 .5 L5 5 L9.500 .5" fill="none" stroke="#444" stroke-width="1.100"/></svg>
<div class="a" style="left:761px;top:202px;width:54px;height:21px;border:1px solid #b4b4b4;background:#e4e4e4"></div>
<div class="t" style="left:765px;top:204px;font-size:12px;transform:scaleX(.900);transform-origin:0 50%">A4</div>
<svg style="left:800px;top:209px" width="10" height="6" viewBox="0 0 10 6"><path d="M.5 .5 L5 5 L9.500 .5" fill="none" stroke="#444" stroke-width="1.100"/></svg>
<div class="sepv" style="left:818px;top:204px;height:18px"></div>
<div class="a" style="left:824px;top:203px;width:119px;height:19px;border:1px solid #7a7a7a;background:#fff"></div>
<div class="t" style="left:828px;top:205px;">Обычный текст</div>
<svg style="left:930px;top:211px" width="7" height="4" viewBox="0 0 7 4"><path d="M0 0h7L3.500 4z" fill="#333"/></svg>
<div class="sepv" style="left:946px;top:204px;height:18px"></div>
<div class="a" style="left:952px;top:202px;width:88px;height:21px;border:1px solid #8a8a8a;border-radius:3px;background:linear-gradient(#f4f4f4,#e2e2e2 45%,#cfcfcf 50%,#dcdcdc)"></div>
<svg style="left:961px;top:205px" width="14" height="15" viewBox="0 0 14 15"><path d="M1 .5 L13 7.5 L1 14.5z" fill="#3fc53a" stroke="#1e8a1e" stroke-width="1"/></svg>
<div class="t" style="left:980px;top:204px;">Просмотр</div>
<div class="a" style="left:350px;top:228px;width:240px;height:393px;background:#fff;border:1px solid #b8b8b8"></div>
<div class="a" style="left:590px;top:228px;width:7px;height:393px;background:#8e8e8e;border-left:1px solid #a8a8a8;border-right:1px solid #a8a8a8"></div>
<div class="a" style="left:597px;top:228px;width:541px;height:393px;background:#f0f0f0"></div>
<div class="a" style="left:351px;top:229px;width:238px;height:331px;overflow:hidden">
<div class="a" style="left:12px;top:33px;width:1px;height:112px;background-image:linear-gradient(180deg,#9a9a9a 1px,transparent 1px);background-size:1px 2px"></div>
<div class="a" style="left:31px;top:33px;width:1px;height:105px;background-image:linear-gradient(180deg,#9a9a9a 1px,transparent 1px);background-size:1px 2px"></div>
<div class="a" style="left:31px;top:225px;width:1px;height:9px;background-image:linear-gradient(180deg,#9a9a9a 1px,transparent 1px);background-size:1px 2px"></div>
<svg style="left:9px;top:5px" width="6" height="9" viewBox="0 0 6 9"><path d="M1 .7 L5 4.5 L1 8.3" fill="none" stroke="#a6a6a6" stroke-width="1.3"/></svg>
<div class="a" style="left:19px;top:9px;width:4px;height:1px;background-image:linear-gradient(90deg,#9a9a9a 1px,transparent 1px);background-size:2px 1px"></div>
<svg style="left:23px;top:1px" width="16" height="16" viewBox="0 0 16 16"><path d="M10.500 13l3.500-1.500l1.500 2l-2.500 2z" fill="#222"/><path d="M.8 3.200l4.200-2.200l2.500 1.800l6-1.300l1.500 1l-1.800 9.500l-8.400 2.800l-4-4z" fill="#e8a818" stroke="#b88408" stroke-width=".6"/><path d="M3.500 5.500l11.500-3l-2 9.500l-8.200 2.800z" fill="#f6c62c"/><path d="M.8 3.200l2.700 2.300l1.300 9.300" fill="none" stroke="#c89210" stroke-width=".7"/><rect x="7" y="6" width="1.200" height="1.200" fill="#fff3a0"/><rect x="9" y="8" width="1.200" height="1.200" fill="#fff3a0"/><rect x="6" y="9.500" width="1.200" height="1.200" fill="#fff3a0"/></svg>
<div class="t" style="left:44px;top:1px;letter-spacing:-0.15px">Общие переменные</div>
<svg style="left:7px;top:22px" width="10" height="7" viewBox="0 0 10 7"><path d="M.8 1 L5 5.2 L9.2 1" fill="none" stroke="#404040" stroke-width="1.5"/></svg>
<div class="a" style="left:19px;top:25px;width:4px;height:1px;background-image:linear-gradient(90deg,#9a9a9a 1px,transparent 1px);background-size:2px 1px"></div>
<svg style="left:23px;top:17px" width="16" height="16" viewBox="0 0 16 16"><path d="M10.500 13l3.500-1.500l1.500 2l-2.500 2z" fill="#222"/><path d="M.8 3.200l4.200-2.200l2.500 1.800l6-1.300l1.500 1l-1.800 9.500l-8.400 2.800l-4-4z" fill="#e8a818" stroke="#b88408" stroke-width=".6"/><path d="M3.500 5.500l11.500-3l-2 9.500l-8.200 2.800z" fill="#f6c62c"/><path d="M.8 3.200l2.700 2.300l1.300 9.300" fill="none" stroke="#c89210" stroke-width=".7"/><rect x="7" y="6" width="1.200" height="1.200" fill="#fff3a0"/><rect x="9" y="8" width="1.200" height="1.200" fill="#fff3a0"/><rect x="6" y="9.500" width="1.200" height="1.200" fill="#fff3a0"/></svg>
<div class="t" style="left:44px;top:17px;letter-spacing:0.15px">Документ</div>
<div class="a" style="left:31px;top:41px;width:10px;height:1px;background-image:linear-gradient(90deg,#9a9a9a 1px,transparent 1px);background-size:2px 1px"></div>
<svg style="left:42px;top:36px" width="16" height="9" viewBox="0 0 16 9"><rect x=".5" y=".5" width="15" height="8" fill="#fafafa" stroke="#707070" stroke-width="1"/><text x="8" y="7.200" font-size="7.500" font-weight="bold" text-anchor="middle" fill="#4a4a4a" font-family="Liberation Serif,serif" textLength="12" lengthAdjust="spacingAndGlyphs">ABC</text></svg>
<div class="t" style="left:63px;top:33px;letter-spacing:0.02px">Название данного документа</div>
<div class="a" style="left:31px;top:57px;width:10px;height:1px;background-image:linear-gradient(90deg,#9a9a9a 1px,transparent 1px);background-size:2px 1px"></div>
<svg style="left:42px;top:52px" width="16" height="9" viewBox="0 0 16 9"><rect x=".5" y=".5" width="15" height="8" fill="#fafafa" stroke="#707070" stroke-width="1"/><text x="8" y="7.200" font-size="7.500" font-weight="bold" text-anchor="middle" fill="#4a4a4a" font-family="Liberation Serif,serif" textLength="12" lengthAdjust="spacingAndGlyphs">ABC</text></svg>
<div class="t" style="left:63px;top:49px;letter-spacing:-0.08px">Статус документа</div>
<div class="a" style="left:31px;top:73px;width:10px;height:1px;background-image:linear-gradient(90deg,#9a9a9a 1px,transparent 1px);background-size:2px 1px"></div>
<svg style="left:42px;top:68px" width="16" height="9" viewBox="0 0 16 9"><rect x=".5" y=".5" width="15" height="8" fill="#fafafa" stroke="#707070" stroke-width="1"/><text x="8" y="7.200" font-size="7.500" font-weight="bold" text-anchor="middle" fill="#4a4a4a" font-family="Liberation Serif,serif" textLength="12" lengthAdjust="spacingAndGlyphs">ABC</text></svg>
<div class="t" style="left:63px;top:65px;letter-spacing:0.04px">Тип документа</div>
<div class="a" style="left:31px;top:89px;width:10px;height:1px;background-image:linear-gradient(90deg,#9a9a9a 1px,transparent 1px);background-size:2px 1px"></div>
<svg style="left:42px;top:84px" width="16" height="9" viewBox="0 0 16 9"><rect x=".5" y=".5" width="15" height="8" fill="#fafafa" stroke="#707070" stroke-width="1"/><text x="8" y="7.200" font-size="7.500" font-weight="bold" text-anchor="middle" fill="#4a4a4a" font-family="Liberation Serif,serif" textLength="12" lengthAdjust="spacingAndGlyphs">ABC</text></svg>
<div class="t" style="left:63px;top:81px;letter-spacing:0.01px">Код документа</div>
<div class="a" style="left:31px;top:105px;width:10px;height:1px;background-image:linear-gradient(90deg,#9a9a9a 1px,transparent 1px);background-size:2px 1px"></div>
<svg style="left:42px;top:100px" width="16" height="9" viewBox="0 0 16 9"><rect x=".5" y=".5" width="15" height="8" fill="#fafafa" stroke="#707070" stroke-width="1"/><text x="8" y="7.200" font-size="7.500" font-weight="bold" text-anchor="middle" fill="#4a4a4a" font-family="Liberation Serif,serif" textLength="12" lengthAdjust="spacingAndGlyphs">ABC</text></svg>
<div class="t" style="left:63px;top:97px;letter-spacing:-0.06px">Категории документа (одной строкой)</div>
<div class="a" style="left:31px;top:121px;width:10px;height:1px;background-image:linear-gradient(90deg,#9a9a9a 1px,transparent 1px);background-size:2px 1px"></div>
<svg style="left:43px;top:116px" width="14" height="12" viewBox="0 0 14 12"><rect x="0" y="0" width="2" height="2" fill="#111"/><rect x="4" y="0" width="9" height="2" fill="#111"/><rect x="0" y="4.500" width="2" height="2" fill="#111"/><rect x="4" y="4.500" width="9" height="2" fill="#111"/><rect x="0" y="9" width="2" height="2" fill="#111"/><rect x="4" y="9" width="9" height="2" fill="#111"/></svg>
<div class="t" style="left:63px;top:113px;letter-spacing:0.07px">Категории документа (список)</div>
<div class="a" style="left:31px;top:137px;width:10px;height:1px;background-image:linear-gradient(90deg,#9a9a9a 1px,transparent 1px);background-size:2px 1px"></div>
<svg style="left:42px;top:132px" width="16" height="9" viewBox="0 0 16 9"><rect x=".5" y=".5" width="15" height="8" fill="#fafafa" stroke="#707070" stroke-width="1"/><text x="8" y="7.200" font-size="7.500" font-weight="bold" text-anchor="middle" fill="#4a4a4a" font-family="Liberation Serif,serif" textLength="12" lengthAdjust="spacingAndGlyphs">ABC</text></svg>
<div class="t" style="left:63px;top:129px;letter-spacing:-0.09px">Информация о документе</div>
<svg style="left:9px;top:149px" width="6" height="9" viewBox="0 0 6 9"><path d="M1 .7 L5 4.5 L1 8.3" fill="none" stroke="#a6a6a6" stroke-width="1.3"/></svg>
<div class="a" style="left:19px;top:153px;width:4px;height:1px;background-image:linear-gradient(90deg,#9a9a9a 1px,transparent 1px);background-size:2px 1px"></div>
<svg style="left:23px;top:145px" width="16" height="16" viewBox="0 0 16 16"><path d="M10.500 13l3.500-1.500l1.500 2l-2.500 2z" fill="#222"/><path d="M.8 3.200l4.200-2.200l2.500 1.800l6-1.300l1.500 1l-1.800 9.500l-8.400 2.800l-4-4z" fill="#e8a818" stroke="#b88408" stroke-width=".6"/><path d="M3.500 5.500l11.500-3l-2 9.500l-8.200 2.800z" fill="#f6c62c"/><path d="M.8 3.200l2.700 2.300l1.300 9.300" fill="none" stroke="#c89210" stroke-width=".7"/><rect x="7" y="6" width="1.200" height="1.200" fill="#fff3a0"/><rect x="9" y="8" width="1.200" height="1.200" fill="#fff3a0"/><rect x="6" y="9.500" width="1.200" height="1.200" fill="#fff3a0"/></svg>
<div class="t" style="left:44px;top:145px;letter-spacing:0.13px">Должности</div>
<svg style="left:9px;top:165px" width="6" height="9" viewBox="0 0 6 9"><path d="M1 .7 L5 4.5 L1 8.3" fill="none" stroke="#a6a6a6" stroke-width="1.3"/></svg>
<div class="a" style="left:19px;top:169px;width:4px;height:1px;background-image:linear-gradient(90deg,#9a9a9a 1px,transparent 1px);background-size:2px 1px"></div>
<svg style="left:23px;top:161px" width="16" height="16" viewBox="0 0 16 16"><path d="M10.500 13l3.500-1.500l1.500 2l-2.500 2z" fill="#222"/><path d="M.8 3.200l4.200-2.200l2.500 1.800l6-1.300l1.500 1l-1.800 9.500l-8.400 2.800l-4-4z" fill="#e8a818" stroke="#b88408" stroke-width=".6"/><path d="M3.500 5.500l11.500-3l-2 9.500l-8.200 2.800z" fill="#f6c62c"/><path d="M.8 3.200l2.700 2.300l1.300 9.300" fill="none" stroke="#c89210" stroke-width=".7"/><rect x="7" y="6" width="1.200" height="1.200" fill="#fff3a0"/><rect x="9" y="8" width="1.200" height="1.200" fill="#fff3a0"/><rect x="6" y="9.500" width="1.200" height="1.200" fill="#fff3a0"/></svg>
<div class="t" style="left:44px;top:161px;letter-spacing:0.14px">Физические лица</div>
<svg style="left:9px;top:181px" width="6" height="9" viewBox="0 0 6 9"><path d="M1 .7 L5 4.5 L1 8.3" fill="none" stroke="#a6a6a6" stroke-width="1.3"/></svg>
<div class="a" style="left:19px;top:185px;width:4px;height:1px;background-image:linear-gradient(90deg,#9a9a9a 1px,transparent 1px);background-size:2px 1px"></div>
<svg style="left:23px;top:177px" width="16" height="16" viewBox="0 0 16 16"><path d="M10.500 13l3.500-1.500l1.500 2l-2.500 2z" fill="#222"/><path d="M.8 3.200l4.200-2.200l2.500 1.800l6-1.300l1.500 1l-1.800 9.500l-8.400 2.800l-4-4z" fill="#e8a818" stroke="#b88408" stroke-width=".6"/><path d="M3.500 5.500l11.500-3l-2 9.500l-8.200 2.800z" fill="#f6c62c"/><path d="M.8 3.200l2.700 2.300l1.300 9.300" fill="none" stroke="#c89210" stroke-width=".7"/><rect x="7" y="6" width="1.200" height="1.200" fill="#fff3a0"/><rect x="9" y="8" width="1.200" height="1.200" fill="#fff3a0"/><rect x="6" y="9.500" width="1.200" height="1.200" fill="#fff3a0"/></svg>
<div class="t" style="left:44px;top:177px;letter-spacing:0.06px">Использование документа в процессах</div>
<svg style="left:9px;top:197px" width="6" height="9" viewBox="0 0 6 9"><path d="M1 .7 L5 4.5 L1 8.3" fill="none" stroke="#a6a6a6" stroke-width="1.3"/></svg>
<div class="a" style="left:19px;top:201px;width:4px;height:1px;background-image:linear-gradient(90deg,#9a9a9a 1px,transparent 1px);background-size:2px 1px"></div>
<svg style="left:23px;top:193px" width="16" height="16" viewBox="0 0 16 16"><path d="M10.500 13l3.500-1.500l1.500 2l-2.500 2z" fill="#222"/><path d="M.8 3.200l4.200-2.200l2.500 1.800l6-1.300l1.500 1l-1.800 9.500l-8.400 2.800l-4-4z" fill="#e8a818" stroke="#b88408" stroke-width=".6"/><path d="M3.500 5.500l11.500-3l-2 9.500l-8.200 2.800z" fill="#f6c62c"/><path d="M.8 3.200l2.700 2.300l1.300 9.300" fill="none" stroke="#c89210" stroke-width=".7"/><rect x="7" y="6" width="1.200" height="1.200" fill="#fff3a0"/><rect x="9" y="8" width="1.200" height="1.200" fill="#fff3a0"/><rect x="6" y="9.500" width="1.200" height="1.200" fill="#fff3a0"/></svg>
<div class="t" style="left:44px;top:193px;letter-spacing:0.09px">Переменные без привязки</div>
<svg style="left:7px;top:214px" width="10" height="7" viewBox="0 0 10 7"><path d="M.8 1 L5 5.2 L9.2 1" fill="none" stroke="#404040" stroke-width="1.5"/></svg>
<div class="a" style="left:19px;top:217px;width:4px;height:1px;background-image:linear-gradient(90deg,#9a9a9a 1px,transparent 1px);background-size:2px 1px"></div>
<svg style="left:23px;top:209px" width="16" height="16" viewBox="0 0 16 16"><path d="M10.500 13l3.500-1.500l1.500 2l-2.500 2z" fill="#222"/><path d="M.8 3.200l4.200-2.200l2.500 1.800l6-1.300l1.500 1l-1.800 9.500l-8.400 2.800l-4-4z" fill="#e8a818" stroke="#b88408" stroke-width=".6"/><path d="M3.500 5.500l11.500-3l-2 9.500l-8.200 2.800z" fill="#f6c62c"/><path d="M.8 3.200l2.700 2.300l1.300 9.300" fill="none" stroke="#c89210" stroke-width=".7"/><rect x="7" y="6" width="1.200" height="1.200" fill="#fff3a0"/><rect x="9" y="8" width="1.200" height="1.200" fill="#fff3a0"/><rect x="6" y="9.500" width="1.200" height="1.200" fill="#fff3a0"/></svg>
<div class="t" style="left:44px;top:209px;letter-spacing:0.07px">Пользовательские переменные</div>
<div class="a" style="left:31px;top:233px;width:8px;height:1px;background-image:linear-gradient(90deg,#9a9a9a 1px,transparent 1px);background-size:2px 1px"></div>
<div class="a" style="left:40px;top:225px;width:121px;height:16px;background:#d9d9d9"></div>
<div class="t" style="left:43px;top:223px;font-size:18px;color:#111;line-height:20px;height:20px;transform:scaleX(.880);transform-origin:0 0;-webkit-text-stroke:.3px #111">%</div>
<div class="t" style="left:63px;top:225px;letter-spacing:-0.06px">Версия документа</div>
</div>
<div class="a" style="left:351px;top:560px;width:238px;height:17px;background:#f0f0f0"></div>
<div class="a" style="left:369px;top:561px;width:182px;height:15px;background:#cdcdcd"></div>
<svg style="left:356px;top:564px" width="7" height="9" viewBox="0 0 7 9"><path d="M6 .7 L1.5 4.5 L6 8.3" fill="none" stroke="#555" stroke-width="1.8"/></svg>
<svg style="left:576px;top:564px" width="7" height="9" viewBox="0 0 7 9"><path d="M1 .7 L5.5 4.5 L1 8.3" fill="none" stroke="#555" stroke-width="1.8"/></svg>
<div class="a" style="left:353px;top:578px;width:235px;height:19px;border:1px solid #8a8a8a;background:#fff;box-shadow:inset 0 0 0 1px #e6e6e6"></div>
<div class="t" style="left:356px;top:579px;">Поиск...</div>
<div class="a" style="left:353px;top:599px;width:235px;height:19px;border:1px solid #8a8a8a;background:#fff;box-shadow:inset 0 0 0 1px #e6e6e6"></div>
<div class="t" style="left:357px;top:601px;">Описание переменной</div>
<svg style="left:573px;top:607px" width="7" height="4" viewBox="0 0 7 4"><path d="M0 0h7L3.5 4z" fill="#333"/></svg>
<div class="a" style="left:602px;top:232px;width:15px;height:16px;border:1px solid #d8d8d8;background:#f4f4f4"></div>
<svg style="left:606px;top:237px" width="7" height="7" viewBox="0 0 7 7"><path d="M1 0v6h6" fill="none" stroke="#111" stroke-width="2"/></svg>
<div class="a" style="left:638px;top:232px;width:94px;height:15px;background:#b5ae96"></div>
<div class="a" style="left:732px;top:232px;width:402px;height:15px;background:#fff"></div>
<div class="a" style="left:0;top:0;width:1134px;height:260px;overflow:hidden">
<div class="a" style="left:646px;top:238px;width:1px;height:2px;background:#222"></div>
<div class="t" style="left:640.9px;top:232px;width:30px;text-align:center;font-size:9px;line-height:15px;height:15px;color:#000">20</div>
<div class="a" style="left:665px;top:238px;width:1px;height:2px;background:#222"></div>
<div class="a" style="left:675px;top:238px;width:1px;height:2px;background:#222"></div>
<div class="a" style="left:684px;top:238px;width:1px;height:2px;background:#222"></div>
<div class="a" style="left:694px;top:237px;width:1px;height:4px;background:#222"></div>
<div class="a" style="left:703px;top:238px;width:1px;height:2px;background:#222"></div>
<div class="a" style="left:713px;top:238px;width:1px;height:2px;background:#222"></div>
<div class="a" style="left:722px;top:238px;width:1px;height:2px;background:#222"></div>
<div class="a" style="left:741px;top:238px;width:1px;height:2px;background:#222"></div>
<div class="a" style="left:750px;top:238px;width:1px;height:2px;background:#222"></div>
<div class="a" style="left:760px;top:238px;width:1px;height:2px;background:#222"></div>
<div class="a" style="left:769px;top:237px;width:1px;height:4px;background:#222"></div>
<div class="a" style="left:779px;top:238px;width:1px;height:2px;background:#222"></div>
<div class="a" style="left:788px;top:238px;width:1px;height:2px;background:#222"></div>
<div class="a" style="left:798px;top:238px;width:1px;height:2px;background:#222"></div>
<div class="t" style="left:792.1px;top:232px;width:30px;text-align:center;font-size:9px;line-height:15px;height:15px;color:#000">20</div>
<div class="a" style="left:817px;top:238px;width:1px;height:2px;background:#222"></div>
<div class="a" style="left:826px;top:238px;width:1px;height:2px;background:#222"></div>
<div class="a" style="left:835px;top:238px;width:1px;height:2px;background:#222"></div>
<div class="a" style="left:845px;top:237px;width:1px;height:4px;background:#222"></div>
<div class="a" style="left:854px;top:238px;width:1px;height:2px;background:#222"></div>
<div class="a" style="left:864px;top:238px;width:1px;height:2px;background:#222"></div>
<div class="a" style="left:873px;top:238px;width:1px;height:2px;background:#222"></div>
<div class="t" style="left:867.7px;top:232px;width:30px;text-align:center;font-size:9px;line-height:15px;height:15px;color:#000">40</div>
<div class="a" style="left:892px;top:238px;width:1px;height:2px;background:#222"></div>
<div class="a" style="left:902px;top:238px;width:1px;height:2px;background:#222"></div>
<div class="a" style="left:911px;top:238px;width:1px;height:2px;background:#222"></div>
<div class="a" style="left:920px;top:237px;width:1px;height:4px;background:#222"></div>
<div class="a" style="left:930px;top:238px;width:1px;height:2px;background:#222"></div>
<div class="a" style="left:939px;top:238px;width:1px;height:2px;background:#222"></div>
<div class="a" style="left:949px;top:238px;width:1px;height:2px;background:#222"></div>
<div class="t" style="left:943.3px;top:232px;width:30px;text-align:center;font-size:9px;line-height:15px;height:15px;color:#000">60</div>
<div class="a" style="left:968px;top:238px;width:1px;height:2px;background:#222"></div>
<div class="a" style="left:977px;top:238px;width:1px;height:2px;background:#222"></div>
<div class="a" style="left:987px;top:238px;width:1px;height:2px;background:#222"></div>
<div class="a" style="left:996px;top:237px;width:1px;height:4px;background:#222"></div>
<div class="a" style="left:1006px;top:238px;width:1px;height:2px;background:#222"></div>
<div class="a" style="left:1015px;top:238px;width:1px;height:2px;background:#222"></div>
<div class="a" style="left:1024px;top:238px;width:1px;height:2px;background:#222"></div>
<div class="t" style="left:1018.9px;top:232px;width:30px;text-align:center;font-size:9px;line-height:15px;height:15px;color:#000">80</div>
<div class="a" style="left:1043px;top:238px;width:1px;height:2px;background:#222"></div>
<div class="a" style="left:1053px;top:238px;width:1px;height:2px;background:#222"></div>
<div class="a" style="left:1062px;top:238px;width:1px;height:2px;background:#222"></div>
<div class="a" style="left:1072px;top:237px;width:1px;height:4px;background:#222"></div>
<div class="a" style="left:1081px;top:238px;width:1px;height:2px;background:#222"></div>
<div class="a" style="left:1091px;top:238px;width:1px;height:2px;background:#222"></div>
<div class="a" style="left:1100px;top:238px;width:1px;height:2px;background:#222"></div>
<div class="t" style="left:1094.5px;top:232px;width:30px;text-align:center;font-size:9px;line-height:15px;height:15px;color:#000">100</div>
<div class="a" style="left:1119px;top:238px;width:1px;height:2px;background:#222"></div>
<div class="a" style="left:1128px;top:238px;width:1px;height:2px;background:#222"></div>
<div class="a" style="left:780px;top:248px;width:1px;height:2px;background:#222"></div>
<div class="a" style="left:828px;top:248px;width:1px;height:2px;background:#222"></div>
<div class="a" style="left:876px;top:248px;width:1px;height:2px;background:#222"></div>
<div class="a" style="left:924px;top:248px;width:1px;height:2px;background:#222"></div>
<div class="a" style="left:972px;top:248px;width:1px;height:2px;background:#222"></div>
<div class="a" style="left:1020px;top:248px;width:1px;height:2px;background:#222"></div>
<div class="a" style="left:1068px;top:248px;width:1px;height:2px;background:#222"></div>
<div class="a" style="left:1116px;top:248px;width:1px;height:2px;background:#222"></div>
</div>
<svg style="left:746px;top:230px" width="21" height="25" viewBox="0 0 21 25"><path d="M6.500 .5h8v2.500l-4 4l-4-4z" fill="#fff" stroke="#b0b0b0" stroke-width="1"/><path d="M10.500 11l4 4v3.500h-8v-3.500z" fill="#fff" stroke="#b0b0b0"/><path d="M6.500 18.500v6M14.500 18.500v6" stroke="#b0b0b0"/><path d="M3.500 18.500h14l3 3l-3 3h-14l-3-3z" fill="none" stroke="#b0b0b0"/></svg>
<div class="a" style="left:601px;top:255px;width:17px;height:365px;background:#fff"></div>
<div class="a" style="left:618px;top:255px;width:20px;height:349px;background:linear-gradient(#a3bde6,#86a6da 30%,#6a90cc 70%,#5d86c6)"></div>
<div class="a" style="left:601px;top:255px;width:17px;height:365px;overflow:hidden">
<div class="a" style="left:6px;top:3px;width:5px;height:1px;background:#222"></div>
<div class="a" style="left:8px;top:13px;width:2px;height:1px;background:#222"></div>
<div class="a" style="left:8px;top:22px;width:2px;height:1px;background:#222"></div>
<div class="a" style="left:8px;top:32px;width:2px;height:1px;background:#222"></div>
<div class="t" style="left:-7px;top:33.0px;width:30px;text-align:center;font-size:9px;line-height:16px;height:16px;transform:rotate(-90deg);color:#000">160</div>
<div class="a" style="left:8px;top:50px;width:2px;height:1px;background:#222"></div>
<div class="a" style="left:8px;top:60px;width:2px;height:1px;background:#222"></div>
<div class="a" style="left:8px;top:69px;width:2px;height:1px;background:#222"></div>
<div class="a" style="left:6px;top:79px;width:5px;height:1px;background:#222"></div>
<div class="a" style="left:8px;top:88px;width:2px;height:1px;background:#222"></div>
<div class="a" style="left:8px;top:98px;width:2px;height:1px;background:#222"></div>
<div class="a" style="left:8px;top:107px;width:2px;height:1px;background:#222"></div>
<div class="t" style="left:-7px;top:108.6px;width:30px;text-align:center;font-size:9px;line-height:16px;height:16px;transform:rotate(-90deg);color:#000">180</div>
<div class="a" style="left:8px;top:126px;width:2px;height:1px;background:#222"></div>
<div class="a" style="left:8px;top:135px;width:2px;height:1px;background:#222"></div>
<div class="a" style="left:8px;top:145px;width:2px;height:1px;background:#222"></div>
<div class="a" style="left:6px;top:154px;width:5px;height:1px;background:#222"></div>
<div class="a" style="left:8px;top:164px;width:2px;height:1px;background:#222"></div>
<div class="a" style="left:8px;top:173px;width:2px;height:1px;background:#222"></div>
<div class="a" style="left:8px;top:183px;width:2px;height:1px;background:#222"></div>
<div class="t" style="left:-7px;top:184.2px;width:30px;text-align:center;font-size:9px;line-height:16px;height:16px;transform:rotate(-90deg);color:#000">200</div>
<div class="a" style="left:8px;top:202px;width:2px;height:1px;background:#222"></div>
<div class="a" style="left:8px;top:211px;width:2px;height:1px;background:#222"></div>
<div class="a" style="left:8px;top:221px;width:2px;height:1px;background:#222"></div>
<div class="a" style="left:6px;top:230px;width:5px;height:1px;background:#222"></div>
<div class="a" style="left:8px;top:239px;width:2px;height:1px;background:#222"></div>
<div class="a" style="left:8px;top:249px;width:2px;height:1px;background:#222"></div>
<div class="a" style="left:8px;top:258px;width:2px;height:1px;background:#222"></div>
<div class="t" style="left:-7px;top:259.8px;width:30px;text-align:center;font-size:9px;line-height:16px;height:16px;transform:rotate(-90deg);color:#000">220</div>
<div class="a" style="left:8px;top:277px;width:2px;height:1px;background:#222"></div>
<div class="a" style="left:8px;top:287px;width:2px;height:1px;background:#222"></div>
<div class="a" style="left:8px;top:296px;width:2px;height:1px;background:#222"></div>
<div class="a" style="left:6px;top:306px;width:5px;height:1px;background:#222"></div>
<div class="a" style="left:8px;top:315px;width:2px;height:1px;background:#222"></div>
<div class="a" style="left:8px;top:324px;width:2px;height:1px;background:#222"></div>
<div class="a" style="left:8px;top:334px;width:2px;height:1px;background:#222"></div>
<div class="t" style="left:-7px;top:335.4px;width:30px;text-align:center;font-size:9px;line-height:16px;height:16px;transform:rotate(-90deg);color:#000">240</div>
<div class="a" style="left:8px;top:353px;width:2px;height:1px;background:#222"></div>
<div class="a" style="left:8px;top:362px;width:2px;height:1px;background:#222"></div>
</div>
<div class="a" style="left:637px;top:255px;width:1px;height:349px;background:#5a6f9c"></div>
<div class="a" style="left:593px;top:418px;width:2px;height:2px;background:#e8e8e8"></div>
<div class="a" style="left:593px;top:422px;width:2px;height:2px;background:#e8e8e8"></div>
<div class="a" style="left:593px;top:426px;width:2px;height:2px;background:#e8e8e8"></div>
<div class="a" style="left:638px;top:255px;width:480px;height:349px;background:#fff"></div>
<div class="a" style="left:732px;top:255px;width:1px;height:349px;background-image:linear-gradient(180deg,#b0b0b0 3px,transparent 3px);background-size:1px 5px"></div>
<div class="a" style="left:1118px;top:255px;width:16px;height:349px;background:#f0f0f0"></div>
<svg style="left:1121px;top:260px" width="9" height="6" viewBox="0 0 9 6"><path d="M1 5.2 L4.5 1.5 L8 5.2" fill="none" stroke="#555" stroke-width="1.8"/></svg>
<div class="a" style="left:1119px;top:417px;width:15px;height:77px;background:#cdcdcd"></div>
<svg style="left:1121px;top:544px" width="9" height="6" viewBox="0 0 9 6"><path d="M1 .8 L4.500 4.500 L8 .8" fill="none" stroke="#555" stroke-width="1.8"/></svg>
<div class="a" style="left:1117px;top:555px;width:17px;height:48px;border:1px solid #3b6fc4;background:#fff"></div>
<svg style="left:1122px;top:560px" width="7" height="8" viewBox="0 0 7 8"><path d="M3.500 0l3 3.500h-6zM3.500 3l3 3.500h-6z" fill="#111"/></svg>
<svg style="left:1122px;top:575px" width="7" height="7" viewBox="0 0 7 7"><circle cx="3.500" cy="3.500" r="2.800" fill="#999" stroke="#111"/></svg>
<svg style="left:1122px;top:589px" width="7" height="8" viewBox="0 0 7 8"><path d="M3.500 8l3-3.500h-6zM3.500 5l3-3.500h-6z" fill="#111"/><rect x="0" y="0" width="7" height="1" fill="#111"/></svg>
<div class="a" style="left:618px;top:603px;width:47px;height:16px;border:1px solid #3b6fc4;background:#fff"></div>
<div class="a" style="left:649px;top:604px;width:15px;height:14px;background:#cfe0f7"></div>
<svg style="left:623px;top:606px" width="9" height="9" viewBox="0 0 9 9"><path d="M0 1h9M0 3.500h9M0 6h9M0 8.500h9" stroke="#111" stroke-width="1"/></svg>
<svg style="left:637px;top:606px" width="9" height="9" viewBox="0 0 9 9"><rect x=".5" y="1.500" width="7" height="6" fill="#fff" stroke="#111"/><circle cx="6.500" cy="6.500" r="2" fill="#246"/></svg>
<svg style="left:652px;top:606px" width="9" height="9" viewBox="0 0 9 9"><rect x=".5" y=".5" width="8" height="8" fill="#fff" stroke="#111"/><path d="M2 3.500h5M2 5.500h5" stroke="#111" stroke-width="1"/></svg>
<div class="a" style="left:665px;top:603px;width:453px;height:16px;background:#f0f0f0"></div>
<svg style="left:671px;top:606px" width="7" height="9" viewBox="0 0 7 9"><path d="M6 .7 L1.500 4.500 L6 8.300" fill="none" stroke="#555" stroke-width="1.800"/></svg>
<div class="a" style="left:684px;top:604px;width:258px;height:14px;background:#cdcdcd"></div>
<svg style="left:1122px;top:606px" width="7" height="9" viewBox="0 0 7 9"><path d="M1 .7 L5.500 4.500 L1 8.300" fill="none" stroke="#555" stroke-width="1.800"/></svg>
<div class="t" style="left:732px;top:280px;font-size:13.33px;line-height:15px;height:15px;color:#000;">%PageBreak%</div>
<div class="a" style="left:732px;top:294px;width:385px;height:1px;background:#111"></div>
<div class="a" style="left:732px;top:360px;width:385px;height:1px;background:#111"></div>
<div class="a" style="left:732px;top:294px;width:1px;height:67px;background-image:linear-gradient(180deg,#111 2px,transparent 2px);background-size:1px 3px"></div>
<div class="a" style="left:735px;top:297px;width:93px;height:19px;border:1px solid #111"></div>
<div class="a" style="left:830px;top:297px;width:287px;height:19px;border:1px solid #111;border-right:none"></div>
<div class="t" style="left:737px;top:300px;font-size:13.33px;line-height:15px;height:15px;color:#000;">Название:</div>
<div class="t" style="left:832px;top:300px;font-size:13.33px;line-height:15px;height:15px;color:#000;">%DocName%</div>
<div class="a" style="left:735px;top:318px;width:93px;height:19px;border:1px solid #111"></div>
<div class="a" style="left:830px;top:318px;width:287px;height:19px;border:1px solid #111;border-right:none"></div>
<div class="t" style="left:737px;top:321px;font-size:13.33px;line-height:15px;height:15px;color:#000;">Статус:</div>
<div class="t" style="left:832px;top:321px;font-size:13.33px;line-height:15px;height:15px;color:#000;">%DocStatus%</div>
<div class="a" style="left:735px;top:339px;width:93px;height:19px;border:1px solid #111"></div>
<div class="a" style="left:830px;top:339px;width:287px;height:19px;border:1px solid #111;border-right:none"></div>
<div class="t" style="left:737px;top:342px;font-size:13.33px;line-height:15px;height:15px;color:#000;">Категории:</div>
<div class="t" style="left:832px;top:342px;font-size:13.33px;line-height:15px;height:15px;color:#000;">%DocCategories%</div>
<div class="t" style="left:732px;top:377px;font-size:13.33px;line-height:15px;height:15px;color:#000;font-weight:bold">%DocName% используется в следующих процессах:</div>
<div class="t" style="left:732px;top:392px;font-size:13.33px;line-height:15px;height:15px;color:#000;">%DocFunctionAndResponsibleFromApprovedProcesses%[133]</div>
<div class="t" style="left:732px;top:423px;font-size:13.33px;line-height:15px;height:15px;color:#000;font-weight:bold">Ответственные за документ:</div>
<div class="a" style="left:733px;top:444px;width:5px;height:5px;background:#000;border-radius:50%"></div>
<div class="t" style="left:756px;top:440px;font-size:13.33px;line-height:15px;height:15px;color:#000;">%DocResponsiblePostsList%</div>
<div class="a" style="left:930px;top:440px;width:2px;height:15px;background:#000"></div>
<div class="a" style="left:348px;top:620px;width:794px;height:37px;background:#ececec;border-top:1px solid #d0d0d0"></div>
<div class="a" style="left:348px;top:622px;width:792px;height:1px;background:#b0b0b0"></div>
<div class="a" style="left:1138px;top:228px;width:1px;height:393px;background:#d4d4d4"></div>
<div class="a" style="left:353px;top:628px;width:115px;height:25px;border:1px solid #8a8a8a;border-radius:3px;background:linear-gradient(#f6f6f6,#e4e4e4 46%,#cdcdcd 52%,#dcdcdc)"></div>
<div class="a" style="left:451px;top:629px;width:1px;height:23px;background:#9a9a9a"></div>
<svg style="left:366px;top:634px" width="16" height="13" viewBox="0 0 16 13"><path d="M1 7 L3.500 5 L6 8.500 L13.500 .8 L15 2 L6.500 12.500z" fill="#2fa32f" stroke="#1b4fb0" stroke-width=".9"/></svg>
<div class="t" style="left:386px;top:632px;">Сохранить</div>
<svg style="left:456px;top:639px" width="7" height="4" viewBox="0 0 7 4"><path d="M0 0h7L3.500 4z" fill="#444"/></svg>
<div class="a" style="left:1037px;top:628px;width:100px;height:25px;border:1px solid #8a8a8a;border-radius:3px;background:linear-gradient(#f6f6f6,#e4e4e4 46%,#cdcdcd 52%,#dcdcdc)"></div>
<svg style="left:1056px;top:634px" width="13" height="11" viewBox="0 0 13 11"><path d="M1.500 1 L12.500 10.500 M12 1 L1.500 10.500" stroke="#3a0000" stroke-width="3.600"/><path d="M1.500 1 L12 10 M11.500 1 L1.500 10" stroke="#c40f0f" stroke-width="2.200"/></svg>
<div class="t" style="left:1076px;top:632px;">Закрыть</div>
<svg style="left:0;top:0" width="1147" height="663"><path d="M169 122 Q256 275 351.500 431" stroke="#ed1c24" stroke-width="5" fill="none" stroke-linecap="round"/><path d="M351.500 414 L352 431.500 L335.500 424.500" stroke="#ed1c24" stroke-width="5" fill="none" stroke-linejoin="round" stroke-linecap="round"/><rect x="355.500" y="436.500" width="211" height="38" fill="none" stroke="#ed1c24" stroke-width="5"/></svg>
</body></html>
